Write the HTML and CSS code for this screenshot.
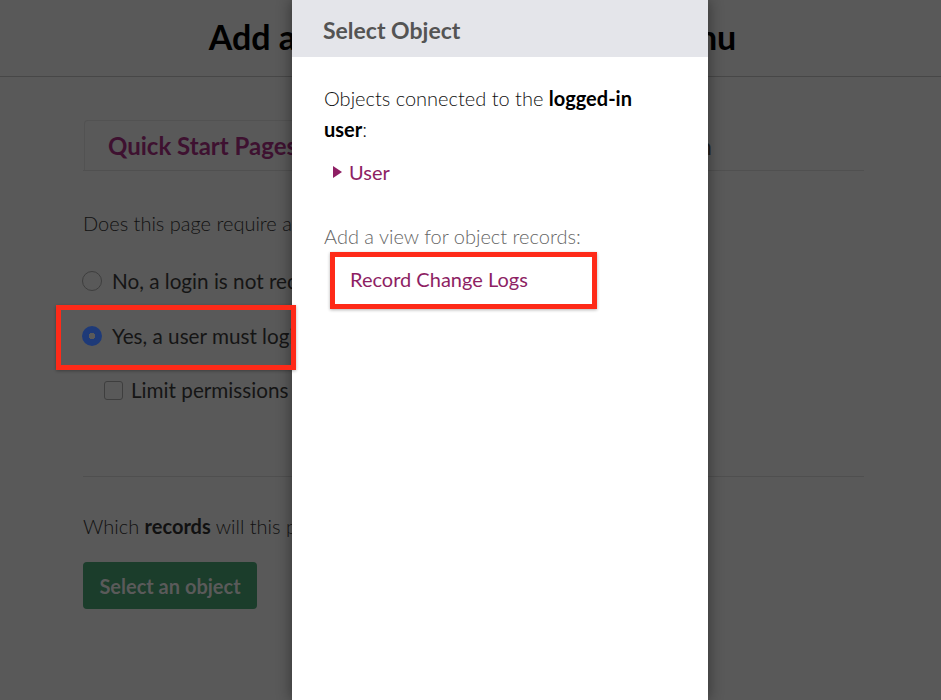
FILE: index.html
```html
<!DOCTYPE html>
<html lang="en">
<head>
<meta charset="utf-8">
<title>Add a Page</title>
<link rel="stylesheet" href="styles.css">
</head>
<body>
<div class="page">
  <header class="top">
    <h1 class="title">Add a New Page to the Main Menu</h1>
  </header>
  <main class="main">
    <nav class="tabs">
      <div class="tab active">Quick Start Pages</div>
      <div class="tab">Start from Scratch</div>
    </nav>
    <p class="question">Does this page require a login?</p>
    <div class="options">
      <label class="option"><span class="radio"></span>No, a login is not required</label>
      <label class="option"><span class="radio checked"></span>Yes, a user must login</label>
      <label class="option sub"><span class="checkbox"></span>Limit permissions</label>
    </div>
    <hr class="divider">
    <p class="question">Which <strong>records</strong> will this page display?</p>
    <button class="btn">Select an object</button>
  </main>
</div>

<div class="modal">
  <div class="modal-head">Select Object</div>
  <div class="modal-body">
    <p class="mtext">Objects connected to the <strong>logged-in user</strong>:</p>
    <div class="tree"><span class="caret"></span>User</div>
    <p class="mtext muted">Add a view for object records:</p>
    <div class="record">Record Change Logs</div>
  </div>
</div>

<div class="mark mark-login"></div>
<div class="mark mark-record"></div>
</body>
</html>
```

FILE: styles.css
```css
html, body {
  margin: 0;
  padding: 0;
}
body {
  width: 941px;
  height: 700px;
  overflow: hidden;
  background: #595959;
  font-family: Lato, "Open Sans", sans-serif;
  color: #141414;
  position: relative;
}
.page {
  height: 700px;
}
.top {
  height: 77px;
  border-bottom: 1px solid #474747;
  display: flex;
  align-items: center;
  justify-content: center;
  box-sizing: border-box;
  padding-bottom: 4px;
}
.title {
  margin: 0;
  font-size: 34px;
  font-weight: 700;
  color: #000;
  position: relative;
  left: 2px;
}
.main {
  margin-left: 83px;
  width: 781px;
}
.tabs {
  margin-top: 43px;
  display: flex;
  border-bottom: 1px solid #505050;
  height: 50px;
}
.tab {
  height: 49px;
  padding: 0 23px;
  display: flex;
  align-items: center;
  font-size: 24px;
  color: #1e1e1e;
  border: 1px solid transparent;
  border-bottom: none;
  margin-left: 1px;
}
.tab.active {
  font-weight: 700;
  color: #3e1130;
  border-color: #525252;
  border-radius: 4px 4px 0 0;
  background: #595959;
}
.tab + .tab {
  margin-left: 176px;
}
.question {
  margin: 37px 0 0;
  font-size: 20px;
  line-height: 30px;
  font-weight: 300;
  color: #111;
}
.question strong {
  font-weight: 700;
}
.options {
  margin-top: 28px;
  display: flex;
  flex-direction: column;
  gap: 25px;
}
.option {
  height: 30px;
  display: flex;
  align-items: center;
  gap: 10px;
  font-size: 20.7px;
  color: #151515;
}
.option.sub {
  margin-top: -1px;
  padding-left: 21px;
  gap: 8px;
}
.radio {
  width: 18px;
  height: 18px;
  border: 1px solid #3e3e3e;
  border-radius: 50%;
  margin-left: -1px;
}
.radio.checked {
  width: 20px;
  height: 20px;
  border: none;
  background: radial-gradient(circle, #5a5a5a 0 3px, #1e3a78 3.5px);
}
.checkbox {
  width: 17px;
  height: 17px;
  border: 1px solid #3e3e3e;
  border-radius: 3px;
}
.divider {
  margin: 71px 0 0;
  border: none;
  border-top: 1px solid #4f4f4f;
}
.divider + .question {
  margin-top: 34px;
}
.btn {
  margin-top: 21px;
  height: 47px;
  width: 174px;
  border: none;
  border-radius: 4px;
  background: #1b3d2b;
  color: #5a5a5a;
  font-family: Lato, "Open Sans", sans-serif;
  font-weight: 700;
  font-size: 20px;
  padding: 0;
}

.modal {
  position: absolute;
  left: 292px;
  top: 0;
  width: 416px;
  height: 700px;
  background: #fff;
  box-shadow: 0 0 14px rgba(0, 0, 0, 0.45);
}
.modal-head {
  height: 57px;
  background: #e4e5ea;
  display: flex;
  align-items: center;
  padding-left: 31px;
  font-size: 23px;
  font-weight: 700;
  color: #545454;
  padding-top: 2px;
  box-sizing: border-box;
}
.modal-body {
  padding: 26px 32px 0;
}
.mtext {
  margin: 0;
  font-size: 20px;
  line-height: 31px;
  font-weight: 300;
  color: #111;
}
.mtext strong {
  font-weight: 700;
  color: #000;
}
.tree {
  margin-top: 12px;
  margin-left: 9px;
  display: flex;
  align-items: center;
  gap: 7px;
  font-size: 20px;
  line-height: 30px;
  color: #8e1f64;
  font-weight: 400;
}
.caret {
  width: 0;
  height: 0;
  border-top: 6px solid transparent;
  border-bottom: 6px solid transparent;
  border-left: 9px solid #8e1f64;
}
.muted {
  margin-top: 34px;
  color: #666;
}
.record {
  margin-top: 12px;
  margin-left: 26px;
  font-size: 20px;
  line-height: 30px;
  color: #8e1f64;
}

.mark {
  position: absolute;
  border: 5px solid #fe2a18;
  box-shadow: 0 1px 3px rgba(0, 0, 0, 0.3);
}
.mark-login {
  left: 56px;
  top: 305px;
  width: 230px;
  height: 55px;
}
.mark-record {
  left: 330px;
  top: 252px;
  width: 257px;
  height: 47px;
}
```
